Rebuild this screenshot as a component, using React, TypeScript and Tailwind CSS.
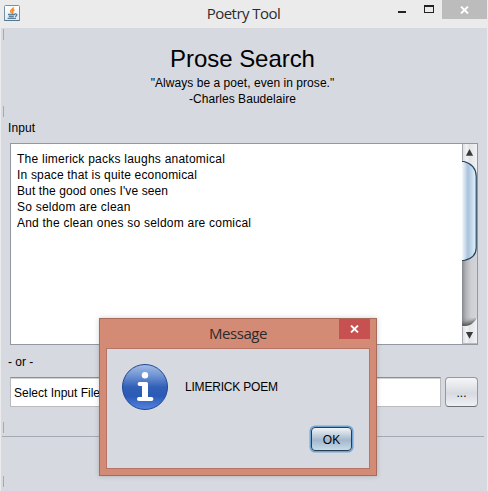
const poem = [
  { text: "The limerick packs laughs anatomical", track: "tracking-[0.24px]" },
  { text: "In space that is quite economical", track: "tracking-[0.18px]" },
  { text: "But the good ones I've seen", track: "tracking-[0.1px]" },
  { text: "So seldom are clean", track: "tracking-[0.22px]" },
  { text: "And the clean ones so seldom are comical", track: "tracking-[0.22px]" },
];

function JavaIcon() {
  return (
    <svg width="16" height="16" viewBox="0 0 16 16" className="block">
      <defs>
        <linearGradient id="jbg" x1="0" y1="0" x2="0" y2="1">
          <stop offset="0" stopColor="#fff" />
          <stop offset="1" stopColor="#e4e8ec" />
        </linearGradient>
      </defs>
      <rect x="0.5" y="0.5" width="15" height="15" rx="1" fill="url(#jbg)" stroke="#7292a8" />
      <path d="M0.5 14.5v1h15v-1" fill="none" stroke="#517790" />
      <path d="M9.4 2.4C9.6 4 6.2 4.8 6.6 6.4c.3.9 1.4 1 1 2M10.4 4.8C8.8 5.5 8.2 6 8.8 6.9c.4.6.1 1.1-.6 1.6" fill="none" stroke="#ee8a26" strokeWidth="1.5" />
      <path d="M4 9.5h7M4.8 11.5h5M3.6 13.4h8.4" fill="none" stroke="#587f9d" strokeWidth="1.3" />
      <path d="M10.6 9.1c2.8-.8 3 1.6.4 2.5" fill="none" stroke="#587f9d" strokeWidth="1.3" />
    </svg>
  );
}

function InfoIcon() {
  return (
    <svg width="48" height="48" viewBox="0 0 48 48" className="block">
      <defs>
        <linearGradient id="info" x1="0" y1="0" x2="0" y2="1">
          <stop offset="0" stopColor="#a4bde6" />
          <stop offset="0.25" stopColor="#6f93d3" />
          <stop offset="0.5" stopColor="#3260b7" />
          <stop offset="0.7" stopColor="#2b5ab6" />
          <stop offset="1" stopColor="#5585e0" />
        </linearGradient>
      </defs>
      <circle cx="24" cy="24" r="22.5" fill="url(#info)" stroke="#1f4894" />
      <circle cx="24" cy="12.2" r="3.2" fill="#fff" />
      <path d="M18.6 19h6.8q1.6 0 1.6 1.6V34h3.4a2 2 0 0 1 0 4H18a2 2 0 0 1 0-4h3V23h-2.4a2 2 0 0 1 0-4z" fill="#fff" />
    </svg>
  );
}

function Scrollbar() {
  return (
    <svg width="15" height="200" viewBox="0 0 15 200" className="block shrink-0">
      <defs>
        <linearGradient id="track" x1="0" y1="0" x2="1" y2="0">
          <stop offset="0" stopColor="#85888d" />
          <stop offset="0.25" stopColor="#b0b2b6" />
          <stop offset="0.6" stopColor="#cdcfd3" />
          <stop offset="1" stopColor="#d3d5d9" />
        </linearGradient>
        <linearGradient id="cap" x1="0" y1="0" x2="1" y2="0">
          <stop offset="0" stopColor="#d9dade" />
          <stop offset="0.3" stopColor="#f2f3f5" />
          <stop offset="0.5" stopColor="#e2e4e7" />
          <stop offset="1" stopColor="#f1f2f4" />
        </linearGradient>
        <linearGradient id="thumb" x1="0" y1="0" x2="1" y2="0">
          <stop offset="0" stopColor="#f4f8fc" />
          <stop offset="0.22" stopColor="#cddcec" />
          <stop offset="0.42" stopColor="#a9c2da" />
          <stop offset="0.7" stopColor="#c5dced" />
          <stop offset="1" stopColor="#e3f5ff" />
        </linearGradient>
        <linearGradient id="shade" x1="0" y1="0" x2="0.5" y2="1">
          <stop offset="0" stopColor="#333" stopOpacity="0" />
          <stop offset="0.35" stopColor="#333" stopOpacity="0.1" />
          <stop offset="1" stopColor="#333" stopOpacity="0.85" />
        </linearGradient>
      </defs>
      <rect width="15" height="200" fill="url(#track)" />
      <rect width="15" height="30" fill="url(#cap)" />
      <path d="M0 174h15q-3 7-9 8H0z" fill="url(#shade)" />
      <path d="M0 182h4q7-1 11-8v26H0z" fill="url(#cap)" />
      <path d="M0 17.5h2Q14 21 14.2 32V104Q14 114 2 116.5H0z" fill="url(#thumb)" />
      <path d="M0 17.5h2Q14 21 14.2 32V104Q14 114 2 116.5H0" fill="none" stroke="#27465e" strokeWidth="1.2" />
      <path d="M0.5 0v17M0.5 183v17" stroke="#a6a9b0" />
      <path d="M0 199.5h15" stroke="#b5b8be" />
      <path d="M7.5 5l3.6 6.8h-7.2zM3.9 188h7.2l-3.6 6.8z" fill="#3b3b3b" />
    </svg>
  );
}

function Tick() {
  return <div className="ml-[2px] h-[11px] w-px bg-[#a5a9b3]" />;
}

function Dialog() {
  return (
    <div className="absolute left-[99px] top-[318px] flex h-[158px] w-[278px] flex-col border border-[#a76b5b] bg-[#d38b76] px-[6px] pb-[6px] shadow-[0_0_5px_rgba(0,0,0,0.2)]">
      <div className="relative h-[29px] shrink-0">
        <div className="pt-[3px] text-center font-['Open_Sans',sans-serif] text-[15px] leading-[22px] tracking-[-0.45px] text-[#2b2b2b]">Message</div>
        <div className="absolute right-0 top-0 flex h-[20px] w-[31px] items-center justify-center bg-[#c75050]">
          <svg width="9" height="8" viewBox="0 0 9 8"><path d="M1 .5l7 7M8 .5l-7 7" stroke="#fff" strokeWidth="1.8" /></svg>
        </div>
      </div>
      <div className="flex grow flex-col border border-[#b57466] bg-[#d6d9df]">
        <div className="flex items-center pl-[14px] pt-[14px]">
          <InfoIcon />
          <span className="ml-[16px] whitespace-nowrap text-[12px] leading-4 tracking-[-0.2px]">LIMERICK POEM</span>
        </div>
        <div className="mt-[16px] flex justify-end pr-[17px]">
          <div className="flex h-[24px] w-[41px] items-center justify-center rounded-[4px] border border-[#283e50] bg-linear-to-b from-[#f0f4f7] via-[#a3b8cb] via-55% to-[#c5dced] pt-px text-[12px] shadow-[0_0_0_1.5px_#73a4d1]">OK</div>
        </div>
      </div>
    </div>
  );
}

export default function App() {
  return (
    <div className="relative flex h-[491px] w-[488px] flex-col overflow-hidden bg-[#ebebeb] font-['Liberation_Sans',Arial,sans-serif] text-[12px] leading-4 text-black">
      <header className="relative flex h-[28px] shrink-0 justify-between">
        <div className="ml-[4px] mt-[5px] w-[86px]"><JavaIcon /></div>
        <div className="mt-[2px] font-['Open_Sans',sans-serif] text-[15px] leading-[22px] tracking-[-0.55px] text-[#2b2b2b]">Poetry Tool</div>
        <div className="flex">
          <svg width="45" height="19" viewBox="397 0 45 19">
            <path d="M398 11h8v2h-8z" fill="#222" />
            <path d="M424 5h10v8h-10zM425 7v5h8V7z" fill="#222" fillRule="evenodd" />
          </svg>
          <div className="mr-px flex h-[19px] w-[45px] items-center justify-center bg-[#bcbcbc]">
            <svg width="9" height="8" viewBox="0 0 9 8"><path d="M1 .5l7 7M8 .5l-7 7" stroke="#fff" strokeWidth="1.8" /></svg>
          </div>
        </div>
      </header>
      <main className="mr-px ml-px flex grow flex-col bg-[#d6d9df] pt-px">
        <Tick />
        <div className="h-[66px] pr-[3px] pt-[5px] text-center">
          <h1 className="text-[24px] leading-[28px] tracking-[-0.05px]">Prose Search</h1>
          <p className="mt-[2px] tracking-[0.05px]">"Always be a poet, even in prose."</p>
          <p className="tracking-[0.05px]">-Charles Baudelaire</p>
        </div>
        <Tick />
        <div className="mt-[3px] pl-[7px] tracking-[0.1px]">Input</div>
        <div className="mt-[7px] ml-[9px] flex h-[202px] w-[468px] border border-[#9297a1] bg-white">
          <div className="grow pl-[6px] pt-[7px]">
            {poem.map((line) => <p key={line.text} className={`whitespace-nowrap ${line.track}`}>{line.text}</p>)}
          </div>
          <Scrollbar />
        </div>
        <div className="mt-[9px] pl-[7px]">- or -</div>
        <div className="mt-[7px] ml-[9px] flex h-[30px] gap-[4px]">
          <div className="h-[30px] w-[431px] border border-[#babbbe] border-t-[#8d8e91] bg-white pl-[3px] pt-[7px] shadow-[inset_0_1px_0_#d3d3d4]">Select Input File</div>
          <div className="flex h-[30px] w-[33px] items-center justify-center rounded-[4px] border border-[#95989e] border-b-[#6c7077] bg-linear-to-b from-[#f5f6f8] via-[#d7dae0] via-55% to-[#eef1f5] pt-px">...</div>
        </div>
        <div className="mt-[15px]"><Tick /></div>
        <div className="mt-[3px] ml-px h-px w-[482px] bg-[#a5a9b3]" />
        <div className="mt-[39px]"><Tick /></div>
      </main>
      <Dialog />
    </div>
  );
}
